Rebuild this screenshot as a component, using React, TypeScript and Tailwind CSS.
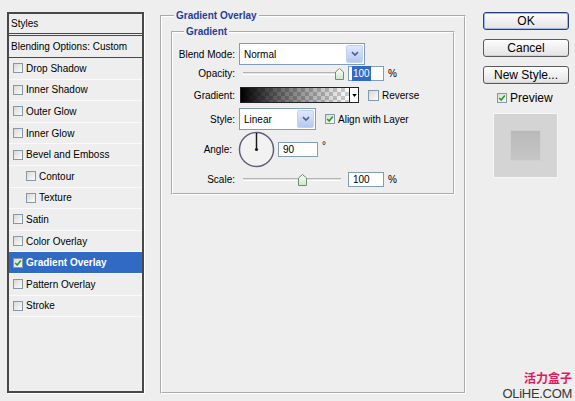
import React from "react";

const STYLE_ROWS: { label: string; indent?: boolean; checked?: boolean }[] = [
  { label: "Drop Shadow" },
  { label: "Inner Shadow" },
  { label: "Outer Glow" },
  { label: "Inner Glow" },
  { label: "Bevel and Emboss" },
  { label: "Contour", indent: true },
  { label: "Texture", indent: true },
  { label: "Satin" },
  { label: "Color Overlay" },
  { label: "Gradient Overlay", checked: true },
  { label: "Pattern Overlay" },
  { label: "Stroke" },
];

function Check({ checked = false, size = "h-[10px] w-[10px]" }: { checked?: boolean; size?: string }) {
  return (
    <span
      className={`inline-flex shrink-0 items-center justify-center border border-[#8597aa] bg-gradient-to-br from-[#d9d9d3] to-[#fcfcfc] ${size}`}
    >
      {checked && (
        <svg viewBox="0 0 10 10" className="h-[8px] w-[8px]">
          <path d="M1.5 5 L4 7.5 L8.5 2" fill="none" stroke="#21a121" strokeWidth="2" />
        </svg>
      )}
    </span>
  );
}

function Select({ value, width }: { value: string; width: string }) {
  return (
    <div className={`flex h-full items-stretch border border-[#7f9db9] bg-white p-[1px] ${width}`}>
      <span className="flex flex-1 items-center pl-[3px]">{value}</span>
      <span className="flex w-[17px] items-center justify-center rounded-[2px] border border-[#c3d1f3] bg-gradient-to-b from-[#dfe8fd] to-[#b5c7f2]">
        <svg viewBox="0 0 10 8" className="h-[6px] w-[8px]">
          <path d="M1 1.5 L5 5.5 L9 1.5" fill="none" stroke="#4d6185" strokeWidth="2" />
        </svg>
      </span>
    </div>
  );
}

function Slider({ thumb }: { thumb: string }) {
  return (
    <div className="relative ml-[5px] flex h-full w-[104px] items-center px-[3px]">
      <div className="h-[2px] flex-1 border-t border-[#b4b4b4] bg-[#e2e2e2] shadow-[0_1px_0_#fff]" />
      <svg viewBox="0 0 9 12" className={`absolute top-[3px] h-[12px] w-[9px] ${thumb}`}>
        <defs>
          <linearGradient id="thumbFill" x1="0" y1="0" x2="0" y2="1">
            <stop offset="0" stopColor="#ffffff" />
            <stop offset="1" stopColor="#c9e8c4" />
          </linearGradient>
        </defs>
        <path d="M0.5 4 L4.5 0.5 L8.5 4 V11.5 H0.5 Z" fill="url(#thumbFill)" stroke="#6f8f72" strokeWidth="1" />
      </svg>
    </div>
  );
}

function NumBox({ value, selected = false, width = "w-[36px]" }: { value: string; selected?: boolean; width?: string }) {
  return (
    <div className={`flex h-[15px] items-center border border-[#7f9db9] bg-white pl-[3px] ${width}`}>
      <span className={selected ? "bg-[#316ac5] px-[1px] text-white" : "px-[1px]"}>{value}</span>
    </div>
  );
}

function Button({ children, primary = false }: { children: React.ReactNode; primary?: boolean }) {
  return (
    <div
      className={`flex h-[18px] w-[86px] items-center justify-center rounded-[3px] border bg-gradient-to-b from-[#fdfdfd] to-[#e3e3e3] text-[12px] leading-none ${
        primary
          ? "border-[#23407e] shadow-[inset_0_0_0_1px_#9fb7e6]"
          : "border-[#5a5a5a] shadow-[inset_0_-1px_0_#d2d2d2]"
      }`}
    >
      {children}
    </div>
  );
}

export default function App() {
  return (
    <div className="flex h-[401px] w-[575px] overflow-hidden bg-[#eeeeee] pl-[7px] pt-[10px] font-['Liberation_Sans',Arial,sans-serif] text-[10px] text-black">
      {/* Styles list */}
      <div className="mt-[2px] flex h-[381px] w-[137px] shrink-0 flex-col border-2 border-[#484848] bg-[#eeeeee] shadow-[1px_1px_0_#fff]">
        <div className="flex h-[20px] items-center border-b border-[#484848] pl-[2px]">Styles</div>
        <div className="mt-[1px] flex h-[23px] items-center border-y border-[#484848] pl-[2px]">
          Blending Options: Custom
        </div>
        {STYLE_ROWS.map((row) => (
          <div
            key={row.label}
            className={`flex h-[21.6px] items-center gap-[3px] border-b border-[#fafafa] ${
              row.indent ? "pl-[17px]" : "pl-[4px]"
            } ${row.checked ? "bg-[#316ac5] font-bold text-white" : ""}`}
          >
            <Check checked={row.checked} />
            <span>{row.label}</span>
          </div>
        ))}
      </div>

      {/* Gradient Overlay group */}
      <fieldset className="ml-[16px] h-[384px] w-[306px] shrink-0 border-2 border-white px-[9px] pt-[4px] [border-style:groove]">
        <legend className="ml-[3px] px-[2px] text-[10px] font-bold leading-[12px] text-[#1f3f9a]">Gradient Overlay</legend>
        <fieldset className="border-2 border-white pb-[6px] pt-[5px] [border-style:groove]">
          <legend className="ml-[11px] px-[2px] text-[10px] font-bold leading-[12px] text-[#1f3f9a]">Gradient</legend>

          <div className="flex h-[22px] items-center">
            <span className="w-[62px] shrink-0 text-right">Blend Mode:</span>
            <div className="ml-[4px] h-full">
              <Select value="Normal" width="w-[126px]" />
            </div>
          </div>

          <div className="flex h-[16px] items-center">
            <span className="w-[62px] shrink-0 text-right">Opacity:</span>
            <Slider thumb="left-[95px]" />
            <div className="ml-[4px]">
              <NumBox value="100" selected />
            </div>
            <span className="ml-[4px]">%</span>
          </div>

          <div className="mt-[5px] flex h-[18px] items-center">
            <span className="w-[62px] shrink-0 text-right">Gradient:</span>
            <div className="ml-[5px] h-[16px] w-[110px] border border-[#222] bg-[linear-gradient(to_right,#000_0%,rgba(0,0,0,0.6)_35%,rgba(0,0,0,0)_100%),repeating-conic-gradient(#cfcfcf_0_25%,#ffffff_0_50%)] bg-[length:100%_100%,8px_8px]" />
            <div className="flex h-[16px] w-[9px] items-center justify-center border border-l-0 border-[#222] bg-white">
              <svg viewBox="0 0 6 4" className="h-[3px] w-[5px]">
                <path d="M0 0 H6 L3 4 Z" fill="#000" />
              </svg>
            </div>
            <div className="ml-[9px] flex items-center gap-[3px]">
              <Check size="h-[11px] w-[11px]" />
              <span>Reverse</span>
            </div>
          </div>

          <div className="mt-[4px] flex h-[22px] items-center">
            <span className="w-[62px] shrink-0 text-right">Style:</span>
            <div className="ml-[4px] h-full">
              <Select value="Linear" width="w-[77px]" />
            </div>
            <div className="ml-[9px] flex items-center gap-[3px]">
              <Check checked />
              <span>Align with Layer</span>
            </div>
          </div>

          <div className="mt-[1px] flex h-[36px] items-center">
            <span className="w-[59px] shrink-0 text-right">Angle:</span>
            <svg viewBox="0 0 38 38" className="ml-[6px] h-[37px] w-[37px]">
              <circle cx="19" cy="19" r="17.5" fill="#f2f2f2" stroke="#5d5d7c" strokeWidth="1.5" />
              <line x1="19" y1="19" x2="19" y2="2" stroke="#1a1a1a" strokeWidth="1.5" />
              <circle cx="19" cy="19" r="1.6" fill="#1a1a1a" />
            </svg>
            <div className="ml-[3px]">
              <NumBox value="90" width="w-[40px]" />
            </div>
            <span className="mb-[8px] ml-[4px]">°</span>
          </div>

          <div className="mt-[4px] flex h-[16px] items-center">
            <span className="w-[62px] shrink-0 text-right">Scale:</span>
            <Slider thumb="left-[58px]" />
            <div className="ml-[4px]">
              <NumBox value="100" />
            </div>
            <span className="ml-[4px]">%</span>
          </div>
        </fieldset>
      </fieldset>

      {/* Buttons and preview */}
      <div className="ml-[17px] mt-[2px] flex h-[389px] w-[89px] shrink-0 flex-col">
        <Button primary>OK</Button>
        <div className="mt-[9px]">
          <Button>Cancel</Button>
        </div>
        <div className="mt-[9px]">
          <Button>New Style...</Button>
        </div>
        <div className="ml-[14px] mt-[8px] flex h-[12px] items-center gap-[3px] text-[12px]">
          <Check checked />
          <span>Preview</span>
        </div>
        <div className="ml-[10px] mt-[9px] flex h-[65px] w-[65px] items-center justify-center border border-[#f6f6f6] bg-[#d4d4d4]">
          <div className="h-[31px] w-[31px] border border-[#d0d0d0] bg-gradient-to-b from-[#b9b9b9] to-[#c6c6c6]" />
        </div>
        <div className="mt-auto flex flex-col items-end">
          <span className="font-['Noto_Sans_CJK_SC',sans-serif] text-[12px] font-bold leading-[16px] text-[#e2175b]">
            活力盒子
          </span>
          <span className="text-[13px] leading-[15px] tracking-[-0.3px] text-[#383838]">OLiHE.COM</span>
        </div>
      </div>
    </div>
  );
}
